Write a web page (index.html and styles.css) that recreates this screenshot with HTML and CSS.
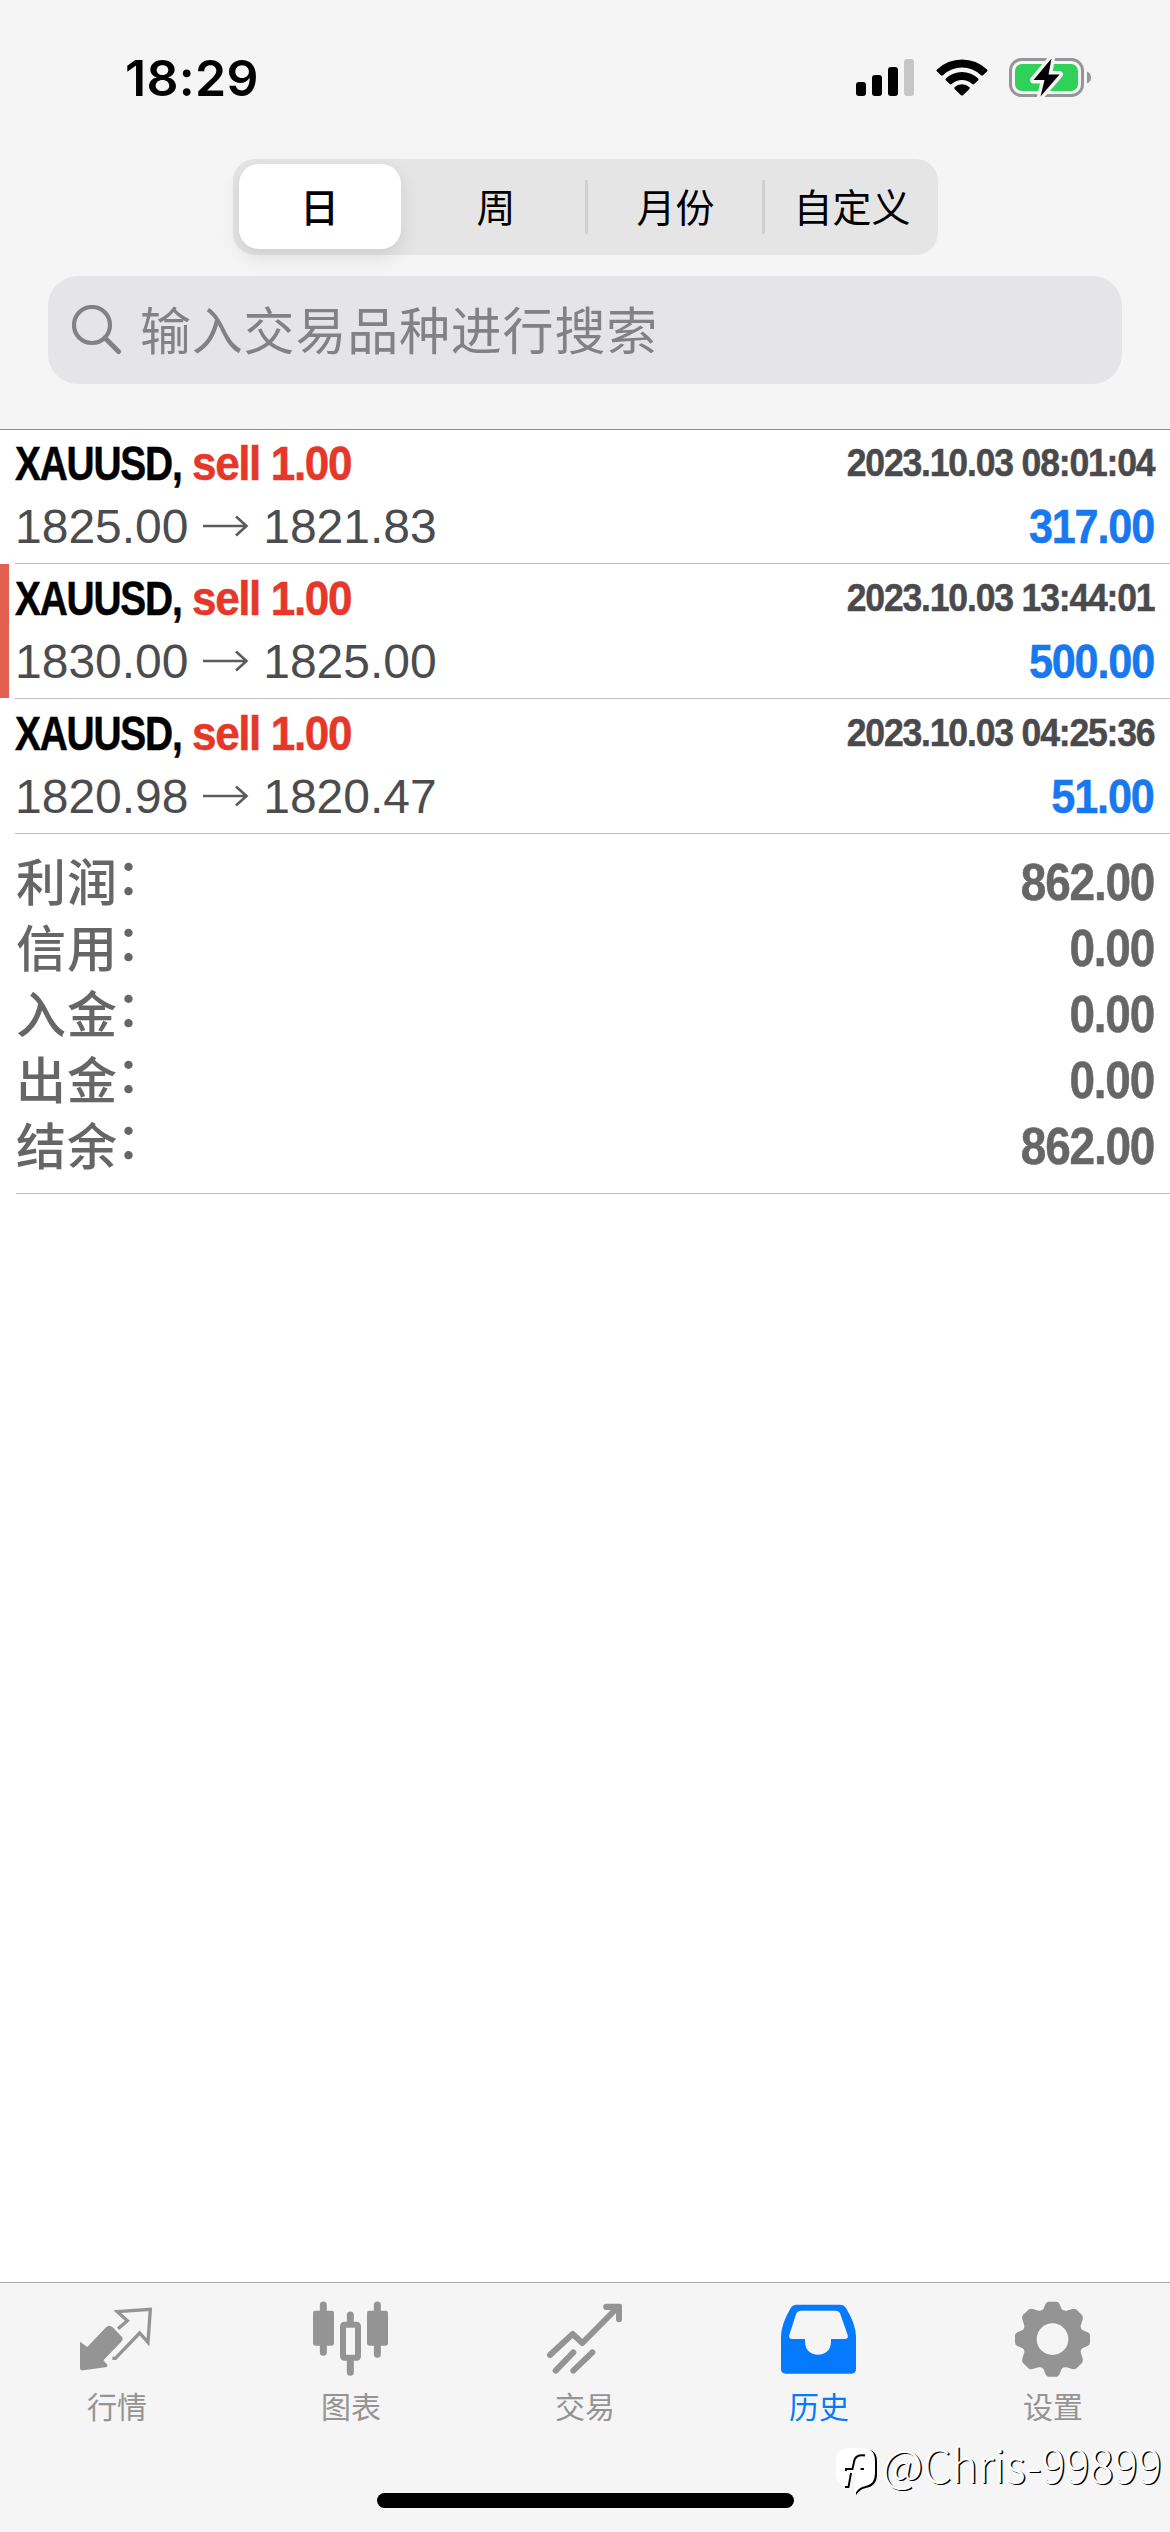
FILE: index.html
```html
<!DOCTYPE html>
<html lang="zh-CN">
<head>
    <meta charset="UTF-8">
    <meta name="viewport" content="width=device-width, initial-scale=1.0">
    <title>历史</title>
    <link rel="stylesheet" href="styles.css">
</head>
<body>
    <!-- 顶部 -->
    <header class="header">
        <div class="status-bar">
            <span class="time">18:29</span>
            <div class="status-icons">
                <svg width="58" height="37" viewBox="0 0 58 37">
                    <rect x="0" y="23" width="10" height="14" rx="3"/>
                    <rect x="16" y="16" width="10" height="21" rx="3"/>
                    <rect x="32" y="8" width="10" height="29" rx="3"/>
                    <rect x="48" y="0" width="10" height="37" rx="3" fill="#c6c6c6"/>
                </svg>
                <svg class="wifi" width="52" height="37" viewBox="0 0 52 37">
                    <path d="M1 10.5Q0 11.500 1 12.400L5 16.300Q6 17 7 16.200A27.500 27.500 0 0 1 45 16.200Q46 17 47 16.300L51 12.400Q52 11.500 51 10.500A36 36 0 0 0 1 10.500Z"/>
                    <path d="M9.800 19.500Q9 20.300 9.800 21.200L13.800 25Q14.800 25.800 15.800 25A15.200 15.200 0 0 1 36.200 25Q37.200 25.800 38.200 25L42.200 21.200Q43 20.300 42.200 19.500A23.500 23.500 0 0 0 9.800 19.500Z"/>
                    <path d="M18.500 28.200Q17.800 29 18.600 29.900L25 36.200Q26 37 27 36.200L33.400 29.900Q34.200 29 33.500 28.200A11 11 0 0 0 18.500 28.200Z"/>
                </svg>
                <svg class="battery" width="84" height="43" viewBox="0 0 84 43">
                    <rect x="1.500" y="3.500" width="72" height="36" rx="11" fill="none" stroke="#98959a" stroke-width="3"/>
                    <path d="M78 15.500Q82 17 82 21.500Q82 26 78 27.500Z" fill="#98959a"/>
                    <rect x="6" y="8" width="63" height="27" rx="7" fill="#30d158"/>
                    <path d="M42.500 2.500L24.500 24H35.500L31.500 40.500L50.500 18.500H39.500Z" fill="#000" stroke="#f5f5f5" stroke-width="7" stroke-linejoin="round" paint-order="stroke"/>
                </svg>
            </div>
        </div>
        <div class="segment">
            <button class="segment-btn active">日</button>
            <button class="segment-btn">周</button>
            <button class="segment-btn divided">月份</button>
            <button class="segment-btn divided">自定义</button>
        </div>
        <div class="search">
            <svg width="50" height="50" viewBox="0 0 50 50">
                <circle cx="20" cy="20" r="18" fill="none" stroke="#828286" stroke-width="4.200"/>
                <path d="M33 33L46.500 46.500" stroke="#828286" stroke-width="5" stroke-linecap="round"/>
            </svg>
            <span>输入交易品种进行搜索</span>
        </div>
    </header>

    <!-- 历史成交 -->
    <main class="content">
        <div class="deal">
            <div class="deal-row">
                <div class="order"><span class="symbol">XAUUSD,</span><span class="sell">sell 1.00</span></div>
                <div class="date">2023.10.03 08:01:04</div>
            </div>
            <div class="deal-row">
                <div class="price">1825.00 <svg class="arrow" viewBox="0 0 48 24"><path d="M1 12H44M34 2.500L44.500 12L34 21.500"/></svg> 1821.83</div>
                <div class="profit">317.00</div>
            </div>
        </div>
        <div class="deal marked">
            <div class="deal-row">
                <div class="order"><span class="symbol">XAUUSD,</span><span class="sell">sell 1.00</span></div>
                <div class="date">2023.10.03 13:44:01</div>
            </div>
            <div class="deal-row">
                <div class="price">1830.00 <svg class="arrow" viewBox="0 0 48 24"><path d="M1 12H44M34 2.500L44.500 12L34 21.500"/></svg> 1825.00</div>
                <div class="profit">500.00</div>
            </div>
        </div>
        <div class="deal">
            <div class="deal-row">
                <div class="order"><span class="symbol">XAUUSD,</span><span class="sell">sell 1.00</span></div>
                <div class="date">2023.10.03 04:25:36</div>
            </div>
            <div class="deal-row">
                <div class="price">1820.98 <svg class="arrow" viewBox="0 0 48 24"><path d="M1 12H44M34 2.500L44.500 12L34 21.500"/></svg> 1820.47</div>
                <div class="profit">51.00</div>
            </div>
        </div>
        <div class="summary">
            <div class="summary-row"><span>利润<i>：</i></span><b>862.00</b></div>
            <div class="summary-row"><span>信用<i>：</i></span><b>0.00</b></div>
            <div class="summary-row"><span>入金<i>：</i></span><b>0.00</b></div>
            <div class="summary-row"><span>出金<i>：</i></span><b>0.00</b></div>
            <div class="summary-row"><span>结余<i>：</i></span><b>862.00</b></div>
        </div>
    </main>

    <!-- 底部导航 -->
    <nav class="tab-bar">
        <div class="tab">
            <svg class="tab-icon" viewBox="231 88 240 240">
                <path d="M240 216L262 232L318 173Q328 163 338 173L364 200Q372 208 364 216L310 272L322 285Q324 291 316 293L250 302Q240 303 240 294Z"/>
                <path d="M354 177L382 153L352 126L451 119L444 218L419 190L346 266H337" fill="none" stroke="currentColor" stroke-width="10"/>
            </svg>
            <span>行情</span>
        </div>
        <div class="tab">
            <svg class="tab-icon" viewBox="933 88 240 240">
                <path d="M970 106V248M1132 106V254M1051 136V160M1051 268V308" stroke="currentColor" stroke-width="21" stroke-linecap="round"/>
                <rect x="939" y="123" width="63" height="105" rx="7"/>
                <rect x="1101" y="123" width="63" height="105" rx="7"/>
                <rect x="1029" y="165" width="45" height="99" rx="4" fill="none" stroke="currentColor" stroke-width="18"/>
            </svg>
            <span>图表</span>
        </div>
        <div class="tab">
            <svg class="tab-icon" viewBox="135 88 240 240">
                <path d="M150 256L218 193L247 220L350 116M167 303L220 248M220 303L277 248" fill="none" stroke="currentColor" stroke-width="18" stroke-linecap="round" stroke-linejoin="round"/>
                <path d="M319 102H360Q366 102 366 108V149A9 9 0 0 1 348 149V121H319A9.500 9.500 0 0 1 319 102Z"/>
            </svg>
            <span>交易</span>
        </div>
        <div class="tab active">
            <svg class="tab-icon" viewBox="837 88 240 240">
                <path fill-rule="evenodd" d="M890 105H1020Q1032 105 1038 115Q1068 165 1068 200V298Q1068 312 1054 312H857Q843 312 843 298V200Q843 165 872 115Q878 105 890 105ZM903 123Q893 123 889 131L868 196Q865 208 877 208H915V216C915 240 932 255 954 255S993 240 993 216V208H1034Q1046 208 1043 196L1020 131Q1017 123 1007 123Z"/>
            </svg>
            <span>历史</span>
        </div>
        <div class="tab">
            <svg class="tab-icon" viewBox="639 88 240 240">
                <path fill-rule="evenodd" d="M745 96H770Q776 97 779 104L785 119Q791 124 799 123L817 118Q824 116 830 120L846 136Q850 142 848 149L842 168Q841 176 847 181L861 187Q870 190 870 197V219Q870 226 861 230L847 236Q841 240 842 248L848 267Q850 274 846 280L830 296Q824 300 817 298L799 293Q791 292 785 297L779 312Q776 320 770 321H745Q739 320 736 312L730 297Q724 292 716 293L698 298Q691 300 685 296L669 280Q665 274 667 267L673 248Q674 240 668 236L654 230Q645 226 645 219V197Q645 190 654 187L668 181Q674 176 673 168L667 149Q665 142 669 136L685 120Q691 116 698 118L716 123Q724 124 730 119L736 104Q739 97 745 96ZM757.500 161A47.500 47.500 0 1 0 757.500 256A47.500 47.500 0 1 0 757.500 161Z"/>
            </svg>
            <span>设置</span>
        </div>
    </nav>

    <div class="home-indicator"></div>
    <div class="watermark">
        <svg width="46" height="50" viewBox="0 0 46 50">
            <path d="M30 3Q41 4 41 15V28Q41 40 30 42Q24 43 20 49L20 40Z"/>
            <path d="M14 2H26Q39 2 39 15V27Q39 38 30 40Q23 41 19.500 47L18 41L13 41Q0 40 0 27V15Q0 2 14 2Z" fill="#fff"/>
            <path d="M15.500 27H20L18.500 45L13 42Z" fill="#f5f5f5"/>
            <path d="M29 9.500Q19 8 18 16L16.500 23H10V25M24.500 23H28M15 27L12.500 41L9 41" fill="none" stroke="#000" stroke-width="1.900"/>
        </svg>
        <span>@Chris-99899</span>
    </div>
</body>
</html>
```

FILE: styles.css
```css
* {
    box-sizing: border-box;
}

body {
    margin: 0;
    width: 1170px;
    height: 2532px;
    display: flex;
    flex-direction: column;
    position: relative;
    overflow: hidden;
    background: #fff;
    font-family: "Liberation Sans", "Noto Sans CJK SC", sans-serif;
}

.header {
    height: 430px;
    background: #f5f5f5;
    border-bottom: 1px solid #8c8c8e;
}

/* 状态栏 */
.status-bar {
    height: 159px;
    padding: 56px 77px 0 125px;
    display: flex;
    justify-content: space-between;
    align-items: flex-start;
}

.time {
    font-family: Inter, sans-serif;
    font-size: 50px;
    font-weight: 600;
    line-height: 44px;
    letter-spacing: 0.3px;
}

.status-icons {
    display: flex;
    align-items: center;
    height: 43px;
}

.wifi {
    margin-left: 22px;
}

.battery {
    margin-left: 21px;
}

/* 周期切换 */
.segment {
    width: 705px;
    height: 96px;
    margin: 0 auto;
    padding: 5px 0 6px 6px;
    display: grid;
    grid-template-columns: 162px 184px 177px 176px;
    background: #e5e5e5;
    border-radius: 22px;
}

.segment-btn {
    padding: 0 0 4px 7px;
    border: none;
    background: none;
    color: #000;
    font-family: "Noto Sans CJK SC", sans-serif;
    font-size: 39px;
    line-height: 80px;
}

.segment-btn.active {
    padding-left: 0;
    background: #fff;
    border-radius: 20px;
    font-weight: 500;
    box-shadow: 0 8px 20px rgba(0, 0, 0, 0.1);
}

.segment-btn.divided {
    padding-left: 5px;
    background: linear-gradient(#d0d0d2, #d0d0d2) no-repeat left center / 3px 54px;
}

/* 搜索框 */
.search {
    height: 108px;
    margin: 21px 48px 0;
    padding: 0 24px;
    display: flex;
    align-items: center;
    gap: 18px;
    background: #e5e5e7;
    border-radius: 30px;
    color: #828286;
    font-family: "Noto Sans CJK SC", sans-serif;
    font-size: 51px;
    letter-spacing: 0.8px;
}

.search span {
    padding-bottom: 4px;
}

.content {
    flex: 1;
}

.deal {
    height: 135px;
    padding: 9px 16px 0 0;
    margin-left: 15px;
    border-bottom: 1px solid #bdbdbf;
    position: relative;
}

.deal:first-child {
    height: 134px;
    padding-top: 8px;
}

.marked::before {
    content: "";
    position: absolute;
    left: -15px;
    top: 0;
    width: 9px;
    height: 134px;
    background: #e35f4f;
}

.deal-row {
    height: 63px;
    display: flex;
    justify-content: space-between;
    line-height: 52px;
    white-space: nowrap;
}

/* 窄体粗字 */
.symbol,
.sell,
.date,
.profit,
.summary-row b {
    font-weight: bold;
    letter-spacing: -1.3px;
    transform: scaleX(0.9);
    transform-origin: right;
    -webkit-text-stroke: 0.5px currentColor;
}

.order {
    display: flex;
    font-size: 48px;
}

.symbol,
.sell {
    width: 177px;
    letter-spacing: -1.5px;
    transform: scaleX(0.81);
    transform-origin: left;
}

.sell {
    color: #e5382a;
    transform: scaleX(0.918);
}

.date {
    font-size: 39px;
    line-height: 50px;
    color: #4a4a4c;
    transform: scaleX(0.912);
}

.price {
    font-size: 48px;
    color: #4c4c4f;
}

.arrow {
    width: 48px;
    height: 24px;
    vertical-align: 5px;
    fill: none;
    stroke: #5c5c5f;
    stroke-width: 2.6;
}

.profit {
    font-size: 48px;
    color: #1878ee;
}

/* 汇总 */
.summary {
    height: 360px;
    margin-left: 16px;
    padding: 15px 16px 0 0;
    border-bottom: 1px solid #bdbdbf;
}

.summary-row {
    height: 66px;
    display: flex;
    justify-content: space-between;
    line-height: 66px;
    color: #666;
}

.summary-row span {
    font-family: "Noto Sans CJK SC", sans-serif;
    font-size: 50px;
    font-weight: 500;
    line-height: 60px;
    letter-spacing: 1px;
}

/* 冒号与汉字居中对齐 */
.summary-row i {
    margin-left: -2px;
    position: relative;
    top: -6px;
    font-style: normal;
}

.summary-row b {
    font-size: 51px;
    line-height: 67px;
}

/* 底部导航 */
.tab-bar {
    height: 250px;
    padding-top: 16px;
    display: grid;
    grid-template-columns: repeat(5, 1fr);
    background: #f5f5f5;
    border-top: 1px solid #a8a8aa;
}

.tab {
    display: flex;
    flex-direction: column;
    align-items: center;
    color: #949494;
    font-family: "Noto Sans CJK SC", sans-serif;
    font-size: 30px;
    line-height: 52px;
}

.tab.active {
    color: #067aff;
}

.tab-icon {
    width: 80px;
    height: 80px;
    fill: currentColor;
}

.home-indicator {
    position: absolute;
    left: 377px;
    bottom: 24px;
    width: 417px;
    height: 15px;
    border-radius: 8px;
    background: #000;
}

.watermark {
    position: absolute;
    left: 836px;
    top: 2446px;
    display: flex;
    font-family: "Noto Sans CJK SC", sans-serif;
    font-size: 45px;
    font-weight: 300;
    line-height: 36px;
    color: #fff;
    text-shadow: 1.5px 1px 0 #000;
}
```
